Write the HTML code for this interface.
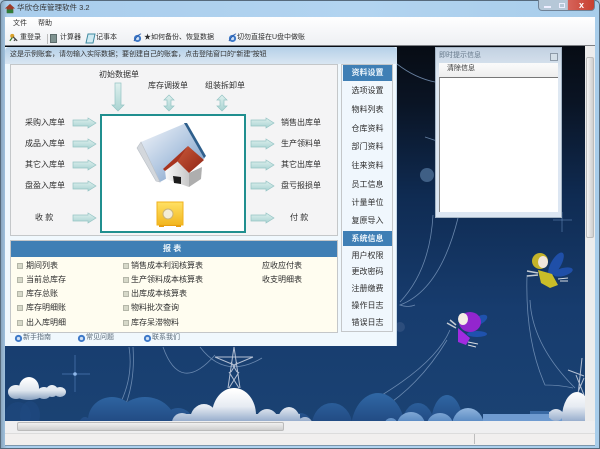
<!DOCTYPE html>
<html><head><meta charset="utf-8">
<style>
*{margin:0;padding:0;box-sizing:border-box}
html,body{width:600px;height:449px;overflow:hidden;background:#a9c6de}
body{position:relative;font-family:"Liberation Sans","Noto Sans CJK SC",sans-serif;font-size:8px;color:#2e2e2e}
.a{position:absolute}
.t{position:absolute;white-space:nowrap;font-size:8px;line-height:12px;color:#2e2e2e}
.s{font-size:7px}
.side{position:absolute;left:342px;width:51px;text-align:center;font-size:8px;line-height:14px;color:#2e2e2e}
.b{background:#3f7fb5;color:#eaf3fa;font-weight:bold;height:16px;left:343px;width:49px;line-height:16px}
.g{position:absolute;width:6px;height:6px;background:#d6d8c8;border:1px solid #b4b6a8}
</style></head><body>
<div class="a" style="left:0;top:0;width:600px;height:449px;background:linear-gradient(90deg,#8aa6be,#a9cdec 1%,#b2d4f0 60%,#a8cdea);border:1px solid #566a7c;border-radius:5px 5px 0 0"></div>
<svg class="a" style="left:4px;top:3px" width="12" height="12" viewBox="0 0 13 13"><path d="M1 6 6.500 1 12 6 10 6V11H3V6Z" fill="#9c3a28"/><path d="M3 7H10V11H3Z" fill="#2f7d3a"/></svg>
<div class="t" style="left:17px;top:2px;font-size:7.500px;color:#333">华欣仓库管理软件 3.2</div>
<div class="a" style="left:538px;top:0;width:57px;height:11px;border:1px solid #6f8296;border-top:0;border-radius:0 0 4px 4px;background:linear-gradient(90deg,#b6c8d8 0,#b6c8d8 52%,#d5635a 53%,#c8402f 100%)"></div>
<div class="a" style="left:544px;top:6px;width:7px;height:2px;background:#eef"></div>
<div class="a" style="left:559px;top:3px;width:6px;height:5px;border:1px solid #eef"></div>
<div class="t" style="left:579px;top:-1px;color:#fff;font-weight:bold;font-size:9px">x</div>

<div class="a" style="left:5px;top:17px;width:590px;height:29px;background:linear-gradient(#fff,#f6f7f9 50%,#eef0f3);border-bottom:1px solid #7c7f84"></div>
<div class="t s" style="left:13px;top:18px">文件</div>
<div class="t s" style="left:38px;top:18px">帮助</div>

<svg class="a" style="left:9px;top:33px" width="9" height="10" viewBox="0 0 11 11"><circle cx="4" cy="3" r="2.500" fill="#d9a02a"/><path d="M5 4 10 9M8 7 6 9" stroke="#444" stroke-width="1.500"/><path d="M1 9 4 5" stroke="#3a7a30" stroke-width="1.500"/></svg>
<div class="t s" style="left:20px;top:32px">重登录</div>
<div class="a" style="left:47px;top:34px;width:1px;height:10px;background:#bbb"></div>
<div class="a" style="left:50px;top:34px;width:7px;height:9px;background:#7e9290;border:1px solid #5c6c6c"></div>
<div class="t s" style="left:60px;top:32px">计算器</div>
<svg class="a" style="left:85px;top:33px" width="11" height="11" viewBox="0 0 11 11"><path d="M3 1H10L8 10H1Z" fill="#cfeaf2" stroke="#3f8aa0"/></svg>
<div class="t s" style="left:96px;top:32px">记事本</div>
<svg class="a" style="left:133px;top:33px" width="9" height="10" viewBox="0 0 10 11"><circle cx="5" cy="6" r="4" fill="#3c78c8"/><circle cx="5" cy="6" r="1.800" fill="#cfe0f5"/><path d="M1 9Q6 1 9 1" stroke="#2a5aa8" fill="none"/></svg>
<div class="t s" style="left:144px;top:32px">★如何备份、恢复数据</div>
<svg class="a" style="left:228px;top:33px" width="9" height="10" viewBox="0 0 10 11"><circle cx="5" cy="6" r="4" fill="#3c78c8"/><circle cx="5" cy="6" r="1.800" fill="#cfe0f5"/><path d="M1 9Q6 1 9 1" stroke="#2a5aa8" fill="none"/></svg>
<div class="t s" style="left:237px;top:32px">切勿直接在U盘中做账</div>

<!-- background -->
<div class="a" style="left:5px;top:46px;width:580px;height:375px;background:linear-gradient(#070c14 0,#0a1424 15%,#0f2b52 40%,#173c6e 70%,#1a4273 100%);overflow:hidden">
<svg width="600" height="449" viewBox="0 0 600 449" style="position:absolute;left:-5px;top:-46px">
<defs>
<linearGradient id="w" gradientUnits="userSpaceOnUse" x1="0" y1="390" x2="0" y2="423"><stop offset="0" stop-color="#fff"/><stop offset=".5" stop-color="#e6ebf2"/><stop offset="1" stop-color="#8ea6c8"/></linearGradient>
<linearGradient id="w2" gradientUnits="userSpaceOnUse" x1="0" y1="378" x2="0" y2="399"><stop offset="0" stop-color="#fff"/><stop offset=".6" stop-color="#dfe6ee"/><stop offset="1" stop-color="#8fa6c4"/></linearGradient>
<linearGradient id="d" gradientUnits="userSpaceOnUse" x1="0" y1="395" x2="0" y2="421"><stop offset="0" stop-color="#2f66a3"/><stop offset="1" stop-color="#224c84"/></linearGradient>
<linearGradient id="l" gradientUnits="userSpaceOnUse" x1="0" y1="408" x2="0" y2="421"><stop offset="0" stop-color="#8fb3dc"/><stop offset="1" stop-color="#5d8cc4"/></linearGradient>
</defs>
<g fill="none" stroke="#7f9cc0" stroke-width=".8" opacity=".8">
<path d="M397 64Q415 78 435 82"/>
<path d="M425 137 437 141"/>
<path d="M433 215Q430 270 400 302"/><path d="M458 218Q440 290 400 305Q408 308 415 305"/>
<path d="M527 275Q525 340 545 385Q560 385 573 388"/><path d="M530 300Q532 345 575 388"/>
<path d="M450 330Q435 365 370 402"/><path d="M447 340Q420 385 380 410"/>
<path d="M129 347Q135 385 110 421"/><path d="M133 347Q136 390 118 421"/>
<path d="M163 347Q180 395 215 355"/>
<path d="M200 347Q225 380 262 358"/>
</g>
<!-- towers -->
<g fill="none" stroke="#b4c0d4" stroke-width="1">
<path d="M234 347 228 388M234 347 240 388M215 357H253M215 357 234 365 253 357M229 372 239 388M239 372 229 388M231 362 237 372M237 362 231 372"/>
<path d="M367 402 363 421M367 402 371 421M355 412H378M358 417H376"/>
<path d="M582 358 578 395M568 370 584 376M576 375 584 395M584 378 578 392"/>
</g>
<!-- dark clouds -->
<g fill="url(#d)">
<ellipse cx="112" cy="420" rx="24" ry="23"/><ellipse cx="145" cy="425" rx="31" ry="28"/><ellipse cx="178" cy="422" rx="15" ry="14"/><ellipse cx="85" cy="425" rx="6" ry="8"/>
<ellipse cx="332" cy="425" rx="20" ry="22"/><ellipse cx="378" cy="430" rx="27" ry="37"/><ellipse cx="418" cy="425" rx="16" ry="22"/><ellipse cx="447" cy="425" rx="16" ry="30"/>
<ellipse cx="300" cy="425" rx="12" ry="12"/>
</g>
<ellipse cx="30" cy="415" rx="10" ry="14" fill="#1f4a82" opacity=".6"/><ellipse cx="18" cy="415" rx="13" ry="13" fill="#1f4a82" opacity=".5"/>
<!-- light clouds -->
<g fill="url(#l)">
<ellipse cx="391" cy="423" rx="6" ry="5"/><ellipse cx="411" cy="425" rx="14" ry="13"/><ellipse cx="440" cy="425" rx="13" ry="12"/><ellipse cx="468" cy="426" rx="16" ry="18"/>
</g>
<rect x="483" y="414" width="102" height="7" fill="#6f9bd0"/>
<rect x="530" y="411" width="35" height="3" fill="#3a6aa4"/>
<!-- white clouds -->
<g fill="url(#w2)">
<ellipse cx="29" cy="388" rx="10" ry="11"/><ellipse cx="16" cy="392" rx="8" ry="7"/><ellipse cx="29" cy="394" rx="14" ry="6"/><ellipse cx="44" cy="393" rx="7" ry="6"/><ellipse cx="52" cy="391" rx="6" ry="6"/><ellipse cx="60" cy="392" rx="6" ry="5"/>
</g>
<g fill="url(#w)">
<ellipse cx="234" cy="415" rx="22" ry="27"/><ellipse cx="204" cy="420" rx="14" ry="16"/><ellipse cx="182" cy="423" rx="10" ry="10"/><ellipse cx="267" cy="423" rx="12" ry="14"/><ellipse cx="289" cy="424" rx="12" ry="17"/><ellipse cx="305" cy="426" rx="8" ry="9"/>
<rect x="180" y="414" width="120" height="8"/>
<ellipse cx="577" cy="418" rx="15" ry="26"/><ellipse cx="556" cy="415" rx="7" ry="6"/><rect x="549" y="412" width="36" height="6"/>
</g>
<!-- star -->
<path d="M75 355V392M62 374H90" stroke="#4d7ab4" stroke-width=".7"/><circle cx="75" cy="374" r="1.800" fill="#8fb8ea"/>
<path d="M562 212V232M553 220H572" stroke="#6f94c4" stroke-width=".5"/>
<circle cx="427" cy="175" r="7" fill="#3f5f85"/>
<circle cx="400" cy="327" r="5" fill="#2c4d7c"/>
<!-- yellow fairy -->
<ellipse cx="556" cy="264" rx="5" ry="13" fill="#1f4fa8" transform="rotate(30 556 264)"/>
<ellipse cx="563" cy="272" rx="4" ry="10" fill="#1f4fa8" transform="rotate(75 563 272)"/>
<path d="M538 270 552 274 558 285 550 288 541 283Z" fill="#c9bd28"/>
<circle cx="540" cy="261" r="8" fill="#c4b32a"/><ellipse cx="543" cy="262" rx="5" ry="6" fill="#f1e6dc"/>
<path d="M527 271 538 273M527 276 538 275" stroke="#c4cbd2" stroke-width="1.500"/>
<path d="M558 279 568 278M560 281 568 281" stroke="#d8dde2"/>
<!-- purple fairy -->
<ellipse cx="480" cy="320" rx="4" ry="8" fill="#1f52ad" transform="rotate(60 480 320)"/>
<ellipse cx="477" cy="334" rx="10" ry="3" fill="#1f52ad"/>
<path d="M458 328 470 338 466 345 458 342Z" fill="#a12be0"/>
<ellipse cx="470" cy="322" rx="11" ry="10" fill="#9326ce"/><ellipse cx="463" cy="319" rx="5" ry="6" fill="#f4ece4"/>
<path d="M447 323 456 328M450 320 456 325" stroke="#c4cbd2" stroke-width="1.500"/>
<path d="M468 342 478 344M468 345 476 347" stroke="#d8dde2"/>
</svg>
</div>

<!-- scrollbars -->
<div class="a" style="left:585px;top:46px;width:10px;height:375px;background:#ececec"></div>
<div class="a" style="left:586px;top:57px;width:8px;height:181px;background:linear-gradient(90deg,#f4f4f4,#cfcfcf);border:1px solid #bcbcbc;border-radius:2px"></div>
<div class="a" style="left:5px;top:421px;width:590px;height:12px;background:#efeff0"></div>
<div class="a" style="left:17px;top:422px;width:267px;height:9px;background:linear-gradient(#f0f0f0,#cfcfcf);border:1px solid #bbb;border-radius:2px"></div>
<div class="a" style="left:5px;top:433px;width:590px;height:12px;background:#f1efee;border-top:1px solid #dcdcdc"></div>
<div class="a" style="left:474px;top:434px;width:1px;height:10px;background:#bdbdbd"></div>
<div class="a" style="left:5px;top:445px;width:590px;height:1px;background:#7d96ab"></div>

<!-- main panel -->
<div class="a" style="left:5px;top:47px;width:392px;height:299px;background:#f0f8fd;border-right:1px solid #c5d8e8"></div>
<div class="a" style="left:5px;top:47px;width:392px;height:17px;background:linear-gradient(#b5d0e8,#d9e6f2);border-radius:4px 4px 0 0"></div>
<div class="t s" style="left:10px;top:49px;color:#333">这是示例账套，请勿输入实际数据；要创建自己的账套，点击登陆窗口的“新建”按钮</div>
<div class="a" style="left:10px;top:64px;width:328px;height:172px;background:#f4f4f5;border:1px solid #c4c7c9"></div>

<div class="t" style="left:99px;top:69px">初始数据单</div>
<div class="t" style="left:148px;top:80px">库存调拨单</div>
<div class="t" style="left:205px;top:80px">组装拆卸单</div>

<svg class="a" style="left:0;top:0" width="600" height="449" viewBox="0 0 600 449">
<defs><linearGradient id="ar" x1="0" y1="0" x2="0" y2="1"><stop offset="0" stop-color="#dff0ee"/><stop offset="1" stop-color="#a9d3d2"/></linearGradient></defs>
<g fill="url(#ar)" stroke="#94c4c4" stroke-width=".7">
<path d="M115 83H121V105H124L118 111 112 105H115Z"/>
<path d="M169 95 174 100H171V106H174L169 111 164 106H167V100H164Z"/>
<path d="M222 95 227 100H224V106H227L222 111 217 106H220V100H217Z"/>
<path d="M73 120H88V118L96 123 88 128V126H73Z"/><path d="M73 141H88V139L96 144 88 149V147H73Z"/><path d="M73 162H88V160L96 165 88 170V168H73Z"/><path d="M73 183H88V181L96 186 88 191V189H73Z"/><path d="M73 215H88V213L96 218 88 223V221H73Z"/>
<path d="M251 120H266V118L274 123 266 128V126H251Z"/><path d="M251 141H266V139L274 144 266 149V147H251Z"/><path d="M251 162H266V160L274 165 266 170V168H251Z"/><path d="M251 183H266V181L274 186 266 191V189H251Z"/><path d="M251 215H266V213L274 218 266 223V221H251Z"/>
</g>
</svg>
<div class="t" style="left:25px;top:117px">采购入库单</div>
<div class="t" style="left:25px;top:138px">成品入库单</div>
<div class="t" style="left:25px;top:159px">其它入库单</div>
<div class="t" style="left:25px;top:180px">盘盈入库单</div>
<div class="t" style="left:35px;top:212px">收 款</div>
<div class="t" style="left:281px;top:117px">销售出库单</div>
<div class="t" style="left:281px;top:138px">生产领料单</div>
<div class="t" style="left:281px;top:159px">其它出库单</div>
<div class="t" style="left:281px;top:180px">盘亏报损单</div>
<div class="t" style="left:290px;top:212px">付 款</div>

<div class="a" style="left:100px;top:114px;width:146px;height:119px;background:#fff;border:2px solid #208f8f"></div>
<svg class="a" style="left:0;top:0" width="600" height="449" viewBox="0 0 600 449">
<defs>
<linearGradient id="bk" x1="0" y1="0" x2="1" y2="1"><stop offset="0" stop-color="#f4f6fa"/><stop offset=".5" stop-color="#b4c9e2"/><stop offset="1" stop-color="#6f93bf"/></linearGradient>
<linearGradient id="bk2" x1="0" y1="0" x2="1" y2="0"><stop offset="0" stop-color="#fafafa"/><stop offset="1" stop-color="#c8c8c8"/></linearGradient>
<linearGradient id="sf" x1="0" y1="0" x2="0" y2="1"><stop offset="0" stop-color="#ffe165"/><stop offset="1" stop-color="#f2b61f"/></linearGradient>
<linearGradient id="rr" x1="0" y1="0" x2="1" y2="1"><stop offset="0" stop-color="#c9593a"/><stop offset="1" stop-color="#8f2415"/></linearGradient>
</defs>
<path d="M141 142 186 123 205 158 160 182Z" fill="url(#bk)"/>
<path d="M141 142 137 148 156 181 160 182Z" fill="#d3d7dc" stroke="#b9bfc6" stroke-width=".6"/>
<path d="M184 123 187 123 206 156 204 158Z" fill="#2f5f8c"/>
<path d="M165 170 177 161 189 173V187L166 179Z" fill="url(#bk2)"/>
<path d="M189 173 202 167 201 179 189 187Z" fill="#aeaeae"/>
<path d="M188 146 204 160 189 173 177 161Z" fill="url(#rr)"/>
<path d="M188 146 163 169 165 171 177 162Z" fill="#a8341f"/>
<path d="M173 176 181 177V184L174 183Z" fill="#1c1c1c"/>
<rect x="157" y="202" width="26" height="23" fill="url(#sf)" stroke="#f0b21c"/>
<path d="M159 225H181V227H176V226H164V227H159Z" fill="#e89f10"/>
<circle cx="168" cy="214" r="5" fill="#f4edd8" stroke="#c9b37a"/>
</svg>

<!-- report -->
<div class="a" style="left:10px;top:240px;width:328px;height:93px;background:#fffdf0;border:1px solid #c4c7c9"></div>
<div class="a" style="left:11px;top:241px;width:326px;height:16px;background:#3f7fb5"></div>
<div class="t" style="left:163px;top:243px;color:#eaf3fa;font-weight:bold">报 表</div>
<div class="g" style="left:17px;top:263px"></div><div class="t" style="left:26px;top:260px">期间列表</div>
<div class="g" style="left:17px;top:277px"></div><div class="t" style="left:26px;top:274px">当前总库存</div>
<div class="g" style="left:17px;top:291px"></div><div class="t" style="left:26px;top:288px">库存总账</div>
<div class="g" style="left:17px;top:305px"></div><div class="t" style="left:26px;top:302px">库存明细账</div>
<div class="g" style="left:17px;top:320px"></div><div class="t" style="left:26px;top:317px">出入库明细</div>
<div class="g" style="left:123px;top:263px"></div><div class="t" style="left:131px;top:260px">销售成本利润核算表</div>
<div class="g" style="left:123px;top:277px"></div><div class="t" style="left:131px;top:274px">生产领料成本核算表</div>
<div class="g" style="left:123px;top:291px"></div><div class="t" style="left:131px;top:288px">出库成本核算表</div>
<div class="g" style="left:123px;top:305px"></div><div class="t" style="left:131px;top:302px">物料批次查询</div>
<div class="g" style="left:123px;top:320px"></div><div class="t" style="left:131px;top:317px">库存呆滞物料</div>
<div class="t" style="left:262px;top:260px">应收应付表</div>
<div class="t" style="left:262px;top:274px">收支明细表</div>

<svg class="a" style="left:14px;top:333px" width="9" height="10" viewBox="0 0 10 11"><circle cx="5" cy="6" r="4" fill="#3c78c8"/><circle cx="5" cy="6" r="1.800" fill="#cfe0f5"/></svg>
<div class="t s" style="left:23px;top:332px;color:#5a6a78">新手指南</div>
<svg class="a" style="left:77px;top:333px" width="9" height="10" viewBox="0 0 10 11"><circle cx="5" cy="6" r="4" fill="#3c78c8"/><circle cx="5" cy="6" r="1.800" fill="#cfe0f5"/></svg>
<div class="t s" style="left:86px;top:332px;color:#5a6a78">常见问题</div>
<svg class="a" style="left:143px;top:333px" width="9" height="10" viewBox="0 0 10 11"><circle cx="5" cy="6" r="4" fill="#3c78c8"/><circle cx="5" cy="6" r="1.800" fill="#cfe0f5"/></svg>
<div class="t s" style="left:152px;top:332px;color:#5a6a78">联系我们</div>

<!-- sidebar -->
<div class="a" style="left:341px;top:64px;width:52px;height:268px;background:#f0f7fd;border:1px solid #c4c7c9"></div>
<div class="side b" style="top:65px">资料设置</div>
<div class="side" style="top:84px">选项设置</div>
<div class="side" style="top:103px">物料列表</div>
<div class="side" style="top:122px">仓库资料</div>
<div class="side" style="top:140px">部门资料</div>
<div class="side" style="top:159px">往来资料</div>
<div class="side" style="top:178px">员工信息</div>
<div class="side" style="top:196px">计量单位</div>
<div class="side" style="top:214px">复原导入</div>
<div class="side b" style="top:231px;height:15px;line-height:15px">系统信息</div>
<div class="side" style="top:249px">用户权限</div>
<div class="side" style="top:265px">更改密码</div>
<div class="side" style="top:282px">注册缴费</div>
<div class="side" style="top:299px">操作日志</div>
<div class="side" style="top:316px">错误日志</div>

<!-- info panel -->
<div class="a" style="left:435px;top:47px;width:127px;height:171px;background:linear-gradient(#c3d2e2,#dfe8f2 15%,#dce6f2);border:1px solid #a5b5c5"></div>
<div class="t s" style="left:439px;top:50px;color:#66788a">即时提示信息</div>
<div class="a" style="left:550px;top:53px;width:8px;height:8px;background:#d4dfe8;border:1px solid #8d9aa8"></div>
<div class="a" style="left:439px;top:63px;width:119px;height:14px;background:linear-gradient(#fbfbfb,#eeeeee)"></div>
<div class="t s" style="left:447px;top:63px;color:#333">清除信息</div>
<div class="a" style="left:439px;top:77px;width:119px;height:135px;background:#fff;border-top:1px solid #777;border-left:1px solid #888"></div>
</body></html>
